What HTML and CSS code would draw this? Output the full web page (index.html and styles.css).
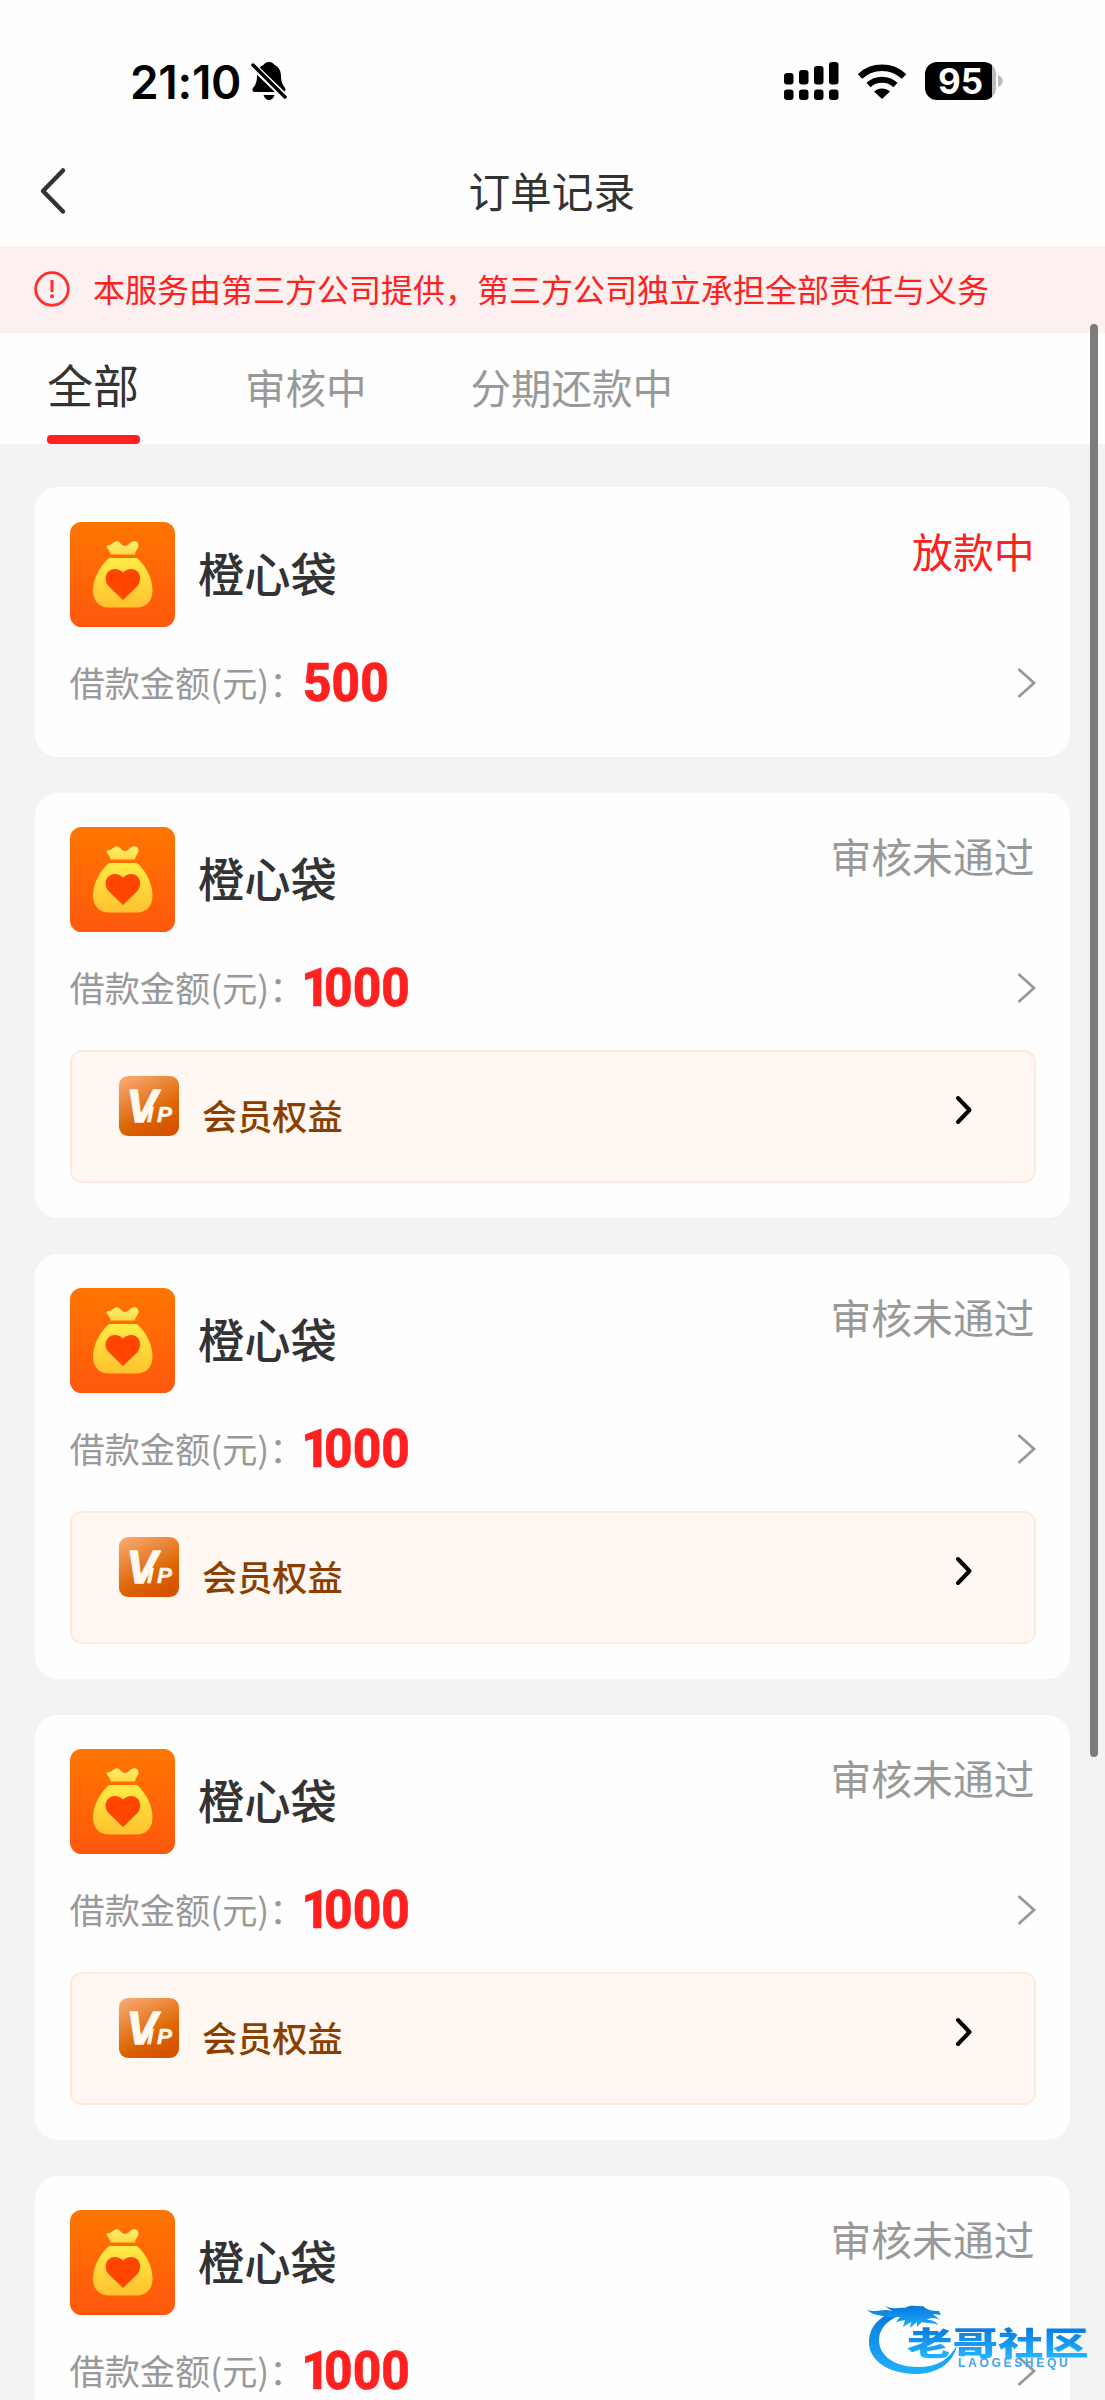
FILE: index.html
```html
<!DOCTYPE html>
<html lang="zh-CN">
<head>
<meta charset="utf-8">
<title>订单记录</title>
<link rel="stylesheet" href="styles.css">
</head>
<body>
<svg class="defs" width="0" height="0" aria-hidden="true">
  <defs>
    <linearGradient id="tile" x1="0" y1="0" x2="0" y2="1"><stop offset="0" stop-color="#ff7600"/><stop offset="1" stop-color="#ff580e"/></linearGradient>
    <linearGradient id="bag" x1="0" y1="0" x2="0" y2="1"><stop offset="0" stop-color="#ffeb45"/><stop offset="1" stop-color="#ffc22e"/></linearGradient>
    <linearGradient id="knot" x1="0" y1="0" x2="0" y2="1"><stop offset="0" stop-color="#fff075"/><stop offset="1" stop-color="#ffd840"/></linearGradient>
    <linearGradient id="vipbg" x1="0.1" y1="0" x2="0.6" y2="1"><stop offset="0" stop-color="#faa972"/><stop offset="0.7" stop-color="#dc6500"/><stop offset="1" stop-color="#d65400"/></linearGradient>
    <linearGradient id="water" x1="0" y1="0" x2="0" y2="1"><stop offset="0" stop-color="#0878dc"/><stop offset="1" stop-color="#20b0ff"/></linearGradient>
    <symbol id="logo" viewBox="0 0 105 105">
      <rect width="105" height="105" rx="11.5" fill="url(#tile)"/>
      <path d="M40.500 32.500C40 28 37 27 36.500 24.500C37 22.500 39 23.500 41 22.500C43 21.500 44.500 19.300 47 19.300C50 19.300 51 24 55 24C59 24 60 19.300 64.500 19.300C67 19.300 68.500 21 68.500 23.500C68.500 27 65.500 28.500 65 32.500Z" fill="url(#knot)"/>
      <path d="M39 36H67C75 43 82.500 55 82.500 69C82.500 79 76 85.500 67 85.500H38.500C29.500 85.500 23 79 23 69C23 55 31 43 39 36Z" fill="url(#bag)"/>
      <path d="M53 78L39 64.500C34.500 60 34.500 53 38.500 49.500C43 45.500 49 46.500 53 50.500C57 46.500 63 45.500 67.500 49.500C71 53 71 60 67 64.500Z" fill="#ff4500"/>
    </symbol>
    <symbol id="vip" viewBox="0 0 60 60">
      <rect width="60" height="60" rx="9" fill="url(#vipbg)"/>
      <text class="viptext" x="7.500" y="46.300" font-size="46" stroke-width="1.500">V</text>
      <text class="viptext" x="28" y="46.300" font-size="22.500" stroke-width="0.500" textLength="25">IP</text>
    </symbol>
    <symbol id="more" viewBox="0 0 20 32"><path d="M1.500 2L17 16L1.500 30" fill="none" stroke="#999" stroke-width="2.800"/></symbol>
    <symbol id="go" viewBox="0 0 18 30"><path d="M3 3L14.500 15L3 27" fill="none" stroke="#000" stroke-width="4" stroke-linecap="round" stroke-linejoin="round"/></symbol>
  </defs>
</svg>

<div class="page">
  <header class="statusbar">
    <div class="clock">
      <span class="time">21:10</span>
      <svg class="mute" width="36" height="40" viewBox="0 0 36 40">
        <path d="M18 1C21.500 1 23 3 23.500 4C28 6 30 10 30 15C30 21 32 24 34 27C35 29 34.500 31 32 31H4C1.500 31 0.500 29 2 27C4.500 24 6 21 6 15C6 10 8 6 12.500 4C13 3 14.500 1 18 1Z"/>
        <path d="M12.500 34H23.500C22.500 37.500 20.500 39 18 39C15.500 39 13.500 37.500 12.500 34Z"/>
        <path d="M1 4L34 36" stroke="#fff" stroke-width="7"/>
        <path d="M2 4L34 36" stroke="#000" stroke-width="3.500" stroke-linecap="round"/>
      </svg>
    </div>
    <div class="signals">
      <svg width="55" height="38" viewBox="0 0 55 38">
        <rect x="0" y="11" width="9.500" height="11.500" rx="3"/><rect x="15" y="8" width="9.500" height="14.500" rx="3"/><rect x="30" y="4" width="9.500" height="18.500" rx="3"/><rect x="45" y="0" width="9.500" height="22.500" rx="3"/>
        <rect x="0" y="27.500" width="9.500" height="10.500" rx="3"/><rect x="15" y="27.500" width="9.500" height="10.500" rx="3"/><rect x="30" y="27.500" width="9.500" height="10.500" rx="3"/><rect x="45" y="27.500" width="9.500" height="10.500" rx="3"/>
      </svg>
      <svg width="48" height="35" viewBox="0 0 48 35" fill="none" stroke="#000">
        <path d="M2 12.500C14 0.800 34 0.800 46 12.500" stroke-width="6.500"/>
        <path d="M10.500 21C18 14 30 14 37.500 21" stroke-width="6"/>
        <path d="M24 35L16 27.500C20.500 23.500 27.500 23.500 32 27.500Z" fill="#000" stroke="none"/>
      </svg>
      <div class="battery"><span class="level">95</span><svg class="tip" width="5" height="12" viewBox="0 0 5 12"><path d="M0 0C6.500 2 6.500 10 0 12Z" fill="#bbb"/></svg></div>
    </div>
  </header>

  <nav class="navbar">
    <svg width="28" height="48" viewBox="0 0 28 48"><path d="M24 3.500L4 24L24 44.500" fill="none" stroke="#333" stroke-width="4.500" stroke-linecap="round" stroke-linejoin="round"/></svg>
    <h1 class="heading">订单记录</h1>
  </nav>

  <div class="notice">
    <svg width="36" height="36" viewBox="0 0 36 36"><circle cx="18" cy="18" r="16.300" fill="none" stroke="#ff2d2d" stroke-width="2.800"/><path d="M18 9V21" stroke="#ff2d2d" stroke-width="3"/><circle cx="18" cy="25.300" r="2" fill="#ff2d2d"/></svg>
    <span>本服务由第三方公司提供，第三方公司独立承担全部责任与义务</span>
  </div>

  <div class="tabs">
    <div class="tab active">全部</div>
    <div class="tab review">审核中</div>
    <div class="tab repay">分期还款中</div>
  </div>

  <main class="orders">
    <section class="card">
      <div class="top"><svg class="logo"><use href="#logo"/></svg><h2 class="name">橙心袋</h2><span class="state paying">放款中</span></div>
      <div class="loan"><span class="label">借款金额(元)：</span><span class="amount">500</span><svg class="more"><use href="#more"/></svg></div>
    </section>
    <section class="card">
      <div class="top"><svg class="logo"><use href="#logo"/></svg><h2 class="name">橙心袋</h2><span class="state">审核未通过</span></div>
      <div class="loan"><span class="label">借款金额(元)：</span><span class="amount"><span class="one">1</span>000</span><svg class="more"><use href="#more"/></svg></div>
      <div class="member"><svg class="vip"><use href="#vip"/></svg><span class="benefit">会员权益</span><svg class="go"><use href="#go"/></svg></div>
    </section>
    <section class="card">
      <div class="top"><svg class="logo"><use href="#logo"/></svg><h2 class="name">橙心袋</h2><span class="state">审核未通过</span></div>
      <div class="loan"><span class="label">借款金额(元)：</span><span class="amount"><span class="one">1</span>000</span><svg class="more"><use href="#more"/></svg></div>
      <div class="member"><svg class="vip"><use href="#vip"/></svg><span class="benefit">会员权益</span><svg class="go"><use href="#go"/></svg></div>
    </section>
    <section class="card">
      <div class="top"><svg class="logo"><use href="#logo"/></svg><h2 class="name">橙心袋</h2><span class="state">审核未通过</span></div>
      <div class="loan"><span class="label">借款金额(元)：</span><span class="amount"><span class="one">1</span>000</span><svg class="more"><use href="#more"/></svg></div>
      <div class="member"><svg class="vip"><use href="#vip"/></svg><span class="benefit">会员权益</span><svg class="go"><use href="#go"/></svg></div>
    </section>
    <section class="card">
      <div class="top"><svg class="logo"><use href="#logo"/></svg><h2 class="name">橙心袋</h2><span class="state">审核未通过</span></div>
      <div class="loan"><span class="label">借款金额(元)：</span><span class="amount"><span class="one">1</span>000</span><svg class="more"><use href="#more"/></svg></div>
    </section>
  </main>

  <div class="scrollbar"></div>

  <div class="watermark">
    <svg width="95" height="76" viewBox="0 0 95 76" fill="url(#water)">
      <path d="M26 12C8 19 2 30 2 43C2 60 22 74 48 74C70 74 86 64 90 45C82 60 70 67 51 67C28 67 12 56 12 40C12 29 20 20 34 15Z"/>
      <path d="M0 9C5 13 12 10 20 10L25 11L18 6C26 10 34 7 38 8C44 4 51 7 56 6C60 10 64 11 72 11L74 15L66 14L73 20C66 17 62 18 60 20C66 20 70 22 71 25C64 22 58 24 55 22L50 27V22L43 28L44 22L36 27L38 20L29 22L33 17L18 17C11 14 5 16 0 9Z"/>
    </svg>
    <span class="brand">老哥社区</span>
    <span class="latin">LAOGESHEQU</span>
  </div>
</div>
</body>
</html>
```
FILE: styles.css
```css
* { box-sizing: border-box; }

body {
  margin: 0;
  background: #f3f3f3;
  color: #333;
  font-family: "Noto Sans CJK SC", sans-serif;
}

svg { display: block; flex: none; }
.defs { position: absolute; }

.page {
  position: relative;
  width: 1105px;
  height: 2400px;
  overflow: hidden;
}

.statusbar {
  display: flex;
  justify-content: space-between;
  align-items: center;
  height: 140px;
  padding: 22px 102px 0 130px;
  background: #fefefe;
}
.clock { display: flex; align-items: center; gap: 10px; }
.time {
  padding-top: 2px;
  color: #000;
  font: 600 46px/50px Inter, sans-serif;
  letter-spacing: -0.300px;
}
.signals { display: flex; align-items: center; gap: 19px; }
.battery { display: flex; align-items: center; gap: 2px; }
.level {
  width: 71px;
  height: 38px;
  border-radius: 12px;
  background: linear-gradient(90deg, #000 95%, #bbb 95%);
  color: #fff;
  font: 700 35px/38px Inter, sans-serif;
  text-align: center;
}

.navbar {
  display: grid;
  grid-template-columns: 28px 1fr 28px;
  align-items: center;
  height: 106px;
  padding: 0 40px 5px 38.500px;
  background: #fefefe;
}
.heading {
  margin: 0;
  padding-bottom: 2px;
  font-size: 41.700px;
  font-weight: 400;
  line-height: 58px;
  text-align: center;
}

.notice {
  display: flex;
  align-items: center;
  gap: 23px;
  height: 86.500px;
  padding: 0 34px;
  background: #fdf0f0;
  color: #ff2020;
  font-size: 32px;
  line-height: 48px;
}
.notice span { padding-bottom: 2px; }

.tabs {
  display: flex;
  height: 111.500px;
  padding-left: 47px;
  background: #fefefe;
  color: #999;
  font-size: 40.500px;
  line-height: 60px;
}
.tab { padding-top: 24px; }
.active {
  display: flex;
  flex-direction: column;
  justify-content: space-between;
  width: 93px;
  padding-top: 20px;
  color: #333;
  font-size: 46px;
}
.active::after {
  content: "";
  height: 9.500px;
  border-radius: 4px;
  background: #ff2020;
}
.review { margin-left: 105px; }
.repay { margin-left: 104px; }

.orders {
  display: flex;
  flex-direction: column;
  gap: 35.500px;
  padding: 43px 35px 0;
}
.card {
  flex: none;
  height: 425.500px;
  padding: 34.500px 34.500px 0;
  border-radius: 23px;
  background: #fefefe;
}
.card:first-child { height: 270px; }
.top { display: flex; height: 105px; }
.logo { width: 105px; height: 105px; }
.name {
  margin: 0 0 0 23.500px;
  font-size: 46.300px;
  font-weight: 500;
  line-height: 99px;
}
.state {
  margin: 0 1px 0 auto;
  color: #999;
  font-size: 40.800px;
  line-height: 58px;
}
.paying { color: #ff2020; }
.loan {
  display: flex;
  align-items: center;
  height: 60px;
  margin-top: 26px;
}
.label {
  width: 233px;
  padding-bottom: 2px;
  color: #999;
  font-size: 35.200px;
  line-height: 58px;
  white-space: nowrap;
}
.amount {
  color: #ff2020;
  font: 800 53px/60px Roboto, sans-serif;
  -webkit-text-stroke: 0.600px #ff2020;
  transform: scaleX(0.935);
  transform-origin: left;
}
.one { margin-left: -2px; letter-spacing: -6px; }
.more { width: 20px; height: 32px; margin-left: auto; margin-right: -1px; }
.member {
  display: flex;
  align-items: flex-start;
  height: 133px;
  margin-top: 31.500px;
  padding: 24px 61px 0 47.500px;
  border: 2px solid #ffe8dc;
  border-radius: 12px;
  background: #fff8f2;
}
.vip { width: 60px; height: 60px; }
.viptext {
  fill: #fff8f1;
  stroke: #fff8f1;
  font-family: "Liberation Sans", sans-serif;
  font-style: italic;
  font-weight: 700;
}
.benefit {
  margin: 12px 0 0 23px;
  color: #8a3f00;
  font-size: 35.200px;
  font-weight: 500;
  line-height: 54px;
}
.go { width: 18px; height: 30px; margin: 19px 0 0 auto; }

.scrollbar {
  position: absolute;
  top: 324px;
  left: 1090px;
  width: 7.500px;
  height: 1433px;
  border-radius: 4px;
  background: #7d7d7d;
}

.watermark { position: absolute; left: 867px; top: 2300px; width: 225px; height: 76px; }
.brand {
  position: absolute;
  left: 40px;
  top: 21px;
  color: transparent;
  background: linear-gradient(#0878dc 15%, #20b0ff 85%);
  background-clip: text;
  font-size: 32px;
  font-weight: 900;
  line-height: 40px;
  white-space: nowrap;
  transform: scaleX(1.420);
  transform-origin: left;
}
.latin {
  position: absolute;
  left: 91px;
  top: 56px;
  color: #45a5e8;
  font: 700 12px/14px "Liberation Sans", sans-serif;
  letter-spacing: 2.700px;
}
```
